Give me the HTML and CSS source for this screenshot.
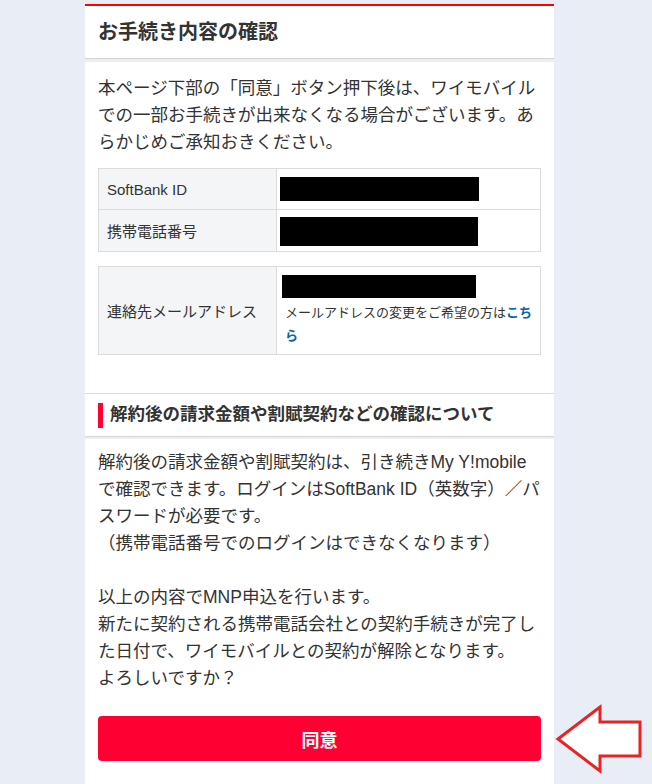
FILE: index.html
```html
<!DOCTYPE html>
<html lang="ja">
<head>
<meta charset="utf-8">
<title>お手続き内容の確認</title>
<link rel="stylesheet" href="styles.css">
</head>
<body>
<div class="page">
  <div class="page-head">
    <h1 class="page-title">お手続き内容の確認</h1>
  </div>
  <div class="section">
    <p class="text">本ページ下部の「同意」ボタン押下後は、ワイモバイルでの一部お手続きが出来なくなる場合がございます。あらかじめご承知おきください。</p>
    <table class="info info-first">
      <tr class="row-a">
        <th class="label">SoftBank ID</th>
        <td class="value"><div class="redact redact-a"></div></td>
      </tr>
      <tr class="row-b">
        <th class="label">携帯電話番号</th>
        <td class="value"><div class="redact redact-b"></div></td>
      </tr>
    </table>
    <table class="info info-second">
      <tr>
        <th class="label">連絡先メールアドレス</th>
        <td class="value value-mail">
          <div class="redact redact-c"></div>
          <p class="note">メールアドレスの変更をご希望の方は<a class="link" href="#">こちら</a></p>
        </td>
      </tr>
    </table>
  </div>
  <div class="sub-head">
    <span class="sub-bar"></span>
    <h2 class="sub-title">解約後の請求金額や割賦契約などの確認について</h2>
  </div>
  <div class="section section-last">
    <p class="text">解約後の請求金額や割賦契約は、引き続きMy Y!mobileで確認できます。ログインはSoftBank ID（英数字）／パスワードが必要です。<br>（携帯電話番号でのログインはできなくなります）<br><br>以上の内容でMNP申込を行います。<br>新たに契約される携帯電話会社との契約手続きが完了した日付で、ワイモバイルとの契約が解除となります。<br>よろしいですか？</p>
    <button class="agree" type="button">同意</button>
  </div>
</div>
<svg class="arrow" width="92" height="74" viewBox="0 0 92 74">
  <polygon points="4,37 46,5 46,20 86,20 86,54 46,54 46,69" fill="#ffffff" stroke="#e52525" stroke-width="3" stroke-linejoin="miter"/>
</svg>
</body>
</html>
```
FILE: styles.css
```css
html, body {
  margin: 0;
  padding: 0;
}
body {
  background: #e9eef6;
  padding-top: 4px;
  font-family: "Liberation Sans", "Noto Sans CJK JP", sans-serif;
  color: #333333;
  position: relative;
  height: 780px;
  overflow: hidden;
}
.page {
  width: 469px;
  margin-left: 85px;
  background: #eeeeee;
}
.page-head {
  background: #ffffff;
  border-top: 2px solid #ff0000;
  border-bottom: 1px solid #d4d4d4;
  height: 52px;
  padding: 0 13px;
  display: flex;
  align-items: center;
  margin-bottom: 3px;
}
.page-title {
  margin: 0;
  font-size: 20px;
  font-weight: bold;
  color: #333333;
  line-height: 1;
}
.section {
  background: #ffffff;
  padding: 13px 13px 38px;
}
.text {
  margin: 0;
  font-size: 17.5px;
  line-height: 27px;
}
.info {
  width: 443px;
  border-collapse: collapse;
  margin-top: 12px;
}
.info-second {
  margin-top: 14px;
}
.label, .value {
  border: 1px solid #dcdcdc;
  padding: 0;
}
.label {
  width: 169px;
  background: #f4f5f7;
  text-align: left;
  font-weight: normal;
  font-size: 15px;
  padding-left: 8px;
  vertical-align: middle;
}
.value {
  padding-left: 3px;
  vertical-align: middle;
}
.row-a {
  height: 41px;
}
.row-b {
  height: 42px;
}
.redact {
  background: #000000;
}
.redact-a {
  width: 199px;
  height: 24px;
}
.redact-b {
  width: 198px;
  height: 29px;
  margin-top: 1px;
}
.value-mail {
  padding: 8px 6px 7px 5px;
}
.redact-c {
  width: 194px;
  height: 23px;
}
.note {
  margin: 3px 0 0 3px;
  font-size: 13px;
  line-height: 23px;
  color: #333333;
}
.link {
  color: #0b65ad;
  font-weight: bold;
  text-decoration: none;
}
.sub-head {
  background: #ffffff;
  border-top: 1px solid #d9d9d9;
  border-bottom: 1px solid #d6d6d6;
  box-shadow: 0 2px 0 #eeeeee;
  height: 42px;
  padding: 0 13px;
  display: flex;
  align-items: center;
  position: relative;
}
.sub-bar {
  width: 5px;
  height: 25px;
  background: #ff0033;
  margin-right: 7px;
  flex: none;
}
.sub-title {
  margin: 0;
  font-size: 17.5px;
  font-weight: bold;
  line-height: 1;
  color: #333333;
}
.section-last {
  padding: 12px 13px 40px;
}
.agree {
  display: block;
  width: 443px;
  height: 45px;
  margin-top: 24px;
  border: none;
  border-radius: 4px;
  background: #ff0033;
  color: #ffffff;
  font-family: "Liberation Sans", "Noto Sans CJK JP", sans-serif;
  font-size: 18px;
  font-weight: bold;
}
.arrow {
  position: absolute;
  left: 554px;
  top: 702px;
}
```
